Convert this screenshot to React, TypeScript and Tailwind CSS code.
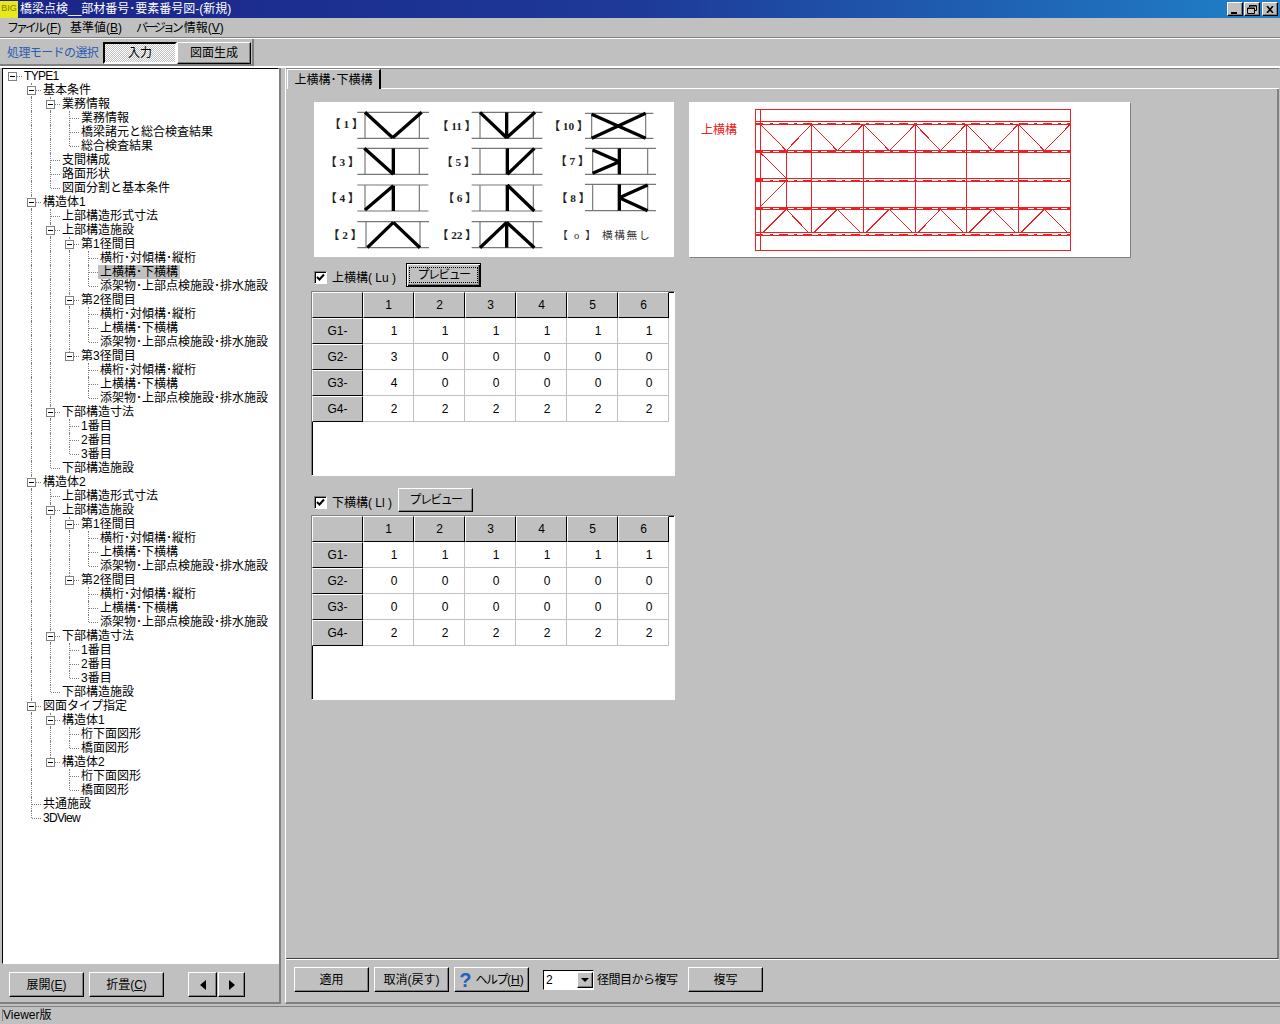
import { ReactNode } from 'react';

const FONT = "font-['Liberation_Sans','Noto_Sans_CJK_JP',sans-serif]";
const BEVEL =
  'border border-t-white border-l-white border-r-black border-b-black shadow-[inset_-1px_-1px_0_#808080] bg-[#c0c0c0]';

const SPAN_ITEMS: [number, string][] = [
  [4, '横桁･対傾構･縦桁'],
  [4, '上横構･下横構'],
  [4, '添架物･上部点検施設･排水施設'],
];

function spans(count: number): [number, string][] {
  const out: [number, string][] = [];
  for (let i = 1; i <= count; i++) {
    out.push([3, `第${i}径間目`], ...SPAN_ITEMS);
  }
  return out;
}

function structure(name: string, spanCount: number): [number, string][] {
  return [
    [1, name],
    [2, '上部構造形式寸法'],
    [2, '上部構造施設'],
    ...spans(spanCount),
    [2, '下部構造寸法'],
    [3, '1番目'],
    [3, '2番目'],
    [3, '3番目'],
    [2, '下部構造施設'],
  ];
}

const TREE: [number, string][] = [
  [0, 'TYPE1'],
  [1, '基本条件'],
  [2, '業務情報'],
  [3, '業務情報'],
  [3, '橋梁諸元と総合検査結果'],
  [3, '総合検査結果'],
  [2, '支間構成'],
  [2, '路面形状'],
  [2, '図面分割と基本条件'],
  ...structure('構造体1', 3),
  ...structure('構造体2', 2),
  [1, '図面タイプ指定'],
  [2, '構造体1'],
  [3, '桁下面図形'],
  [3, '橋面図形'],
  [2, '構造体2'],
  [3, '桁下面図形'],
  [3, '橋面図形'],
  [1, '共通施設'],
  [1, '3DView'],
];

// true when another node of this level follows before the branch closes
function continues(index: number, level: number) {
  for (let j = index + 1; j < TREE.length; j++) {
    if (TREE[j][0] < level) return false;
    if (TREE[j][0] === level) return true;
  }
  return false;
}

function TreeRow({ index }: { index: number }) {
  const [depth, label] = TREE[index];
  const hasChildren = index + 1 < TREE.length && TREE[index + 1][0] > depth;
  const selected = index === 14;
  const latin = /^[A-Z0-9a-z]+$/.test(label);
  const guides = [];
  for (let level = 0; level < depth; level++) {
    guides.push(
      <div key={level} className="w-[19px] h-full shrink-0">
        {level > 0 && continues(index, level) && (
          <div className="ml-[9px] h-full border-l border-dotted border-[#808080]" />
        )}
      </div>,
    );
  }
  return (
    <div className="flex h-[14px] items-center">
      {guides}
      <div className="relative w-[19px] h-full shrink-0">
        {depth > 0 && (
          <div
            className={`ml-[9px] border-l border-dotted border-[#808080] ${
              continues(index, depth) ? 'h-full' : 'h-[7px]'
            }`}
          />
        )}
        <div className="absolute left-[10px] top-[7px] w-[9px] border-t border-dotted border-[#808080]" />
        {hasChildren && (
          <div className="absolute left-[5px] top-[3px] flex h-[9px] w-[9px] items-center justify-center border border-[#808080] bg-white">
            <div className="h-px w-[5px] bg-black" />
          </div>
        )}
      </div>
      <span
        className={`px-[2px] leading-[14px] whitespace-nowrap ${latin ? 'tracking-[-0.700px]' : ''} ${
          selected ? 'bg-[#c0c0c0]' : ''
        }`}
      >
        {label}
      </span>
    </div>
  );
}

function Button({ className, children }: { className: string; children: ReactNode }) {
  return (
    <button type="button" className={`${BEVEL} flex items-center justify-center text-[12px] leading-none ${className}`}>
      {children}
    </button>
  );
}

function Hot({ children }: { children: string }) {
  return (
    <>
      (<span className="underline">{children}</span>)
    </>
  );
}

function Checkbox() {
  return (
    <div className="flex h-[13px] w-[13px] items-center justify-center border border-t-[#808080] border-l-[#808080] border-r-white border-b-white bg-white shadow-[inset_1px_1px_0_#000]">
      <svg viewBox="0 0 9 9" className="h-[9px] w-[9px]">
        <path d="M1 4 L3.5 6.5 L8 1.5" fill="none" stroke="#000" strokeWidth="2" />
      </svg>
    </div>
  );
}

function DataGrid({ rows }: { rows: number[][] }) {
  const headCell = 'flex items-center justify-center border border-t-white border-l-white border-r-black border-b-black bg-[#c0c0c0]';
  return (
    <div className="h-[185px] w-[364px] border border-t-[#808080] border-l-[#808080] border-r-white border-b-white bg-white shadow-[inset_1px_1px_0_#000]">
      <div className="grid grid-cols-[51px_repeat(6,51px)] auto-rows-[26px] w-[357px]">
        <div className={headCell} />
        {[1, 2, 3, 4, 5, 6].map((n) => (
          <div key={n} className={headCell}>
            {n}
          </div>
        ))}
        {rows.map((row, r) => (
          <div key={r} className="contents">
            <div className={headCell}>{`G${r + 1}-`}</div>
            {row.map((v, c) => (
              <div
                key={c}
                className="flex items-center justify-center pl-[12px] border-r border-b border-[#c0c0c0] bg-white"
              >
                {v}
              </div>
            ))}
          </div>
        ))}
      </div>
    </div>
  );
}

type Seg = [number, number, number, number];

const THIN_H = (y1: number, y2: number, x1: number, x2: number): Seg[] => [
  [x1, y1, x2, y1],
  [x1, y2, x2, y2],
];

const BRACES: { label: string; x: number; y: number; thin: Seg[]; thick: Seg[] }[] = [
  { label: '【 1 】', x: 88, y: 100, thin: [...THIN_H(52, 130, 172, 387), [195, 52, 195, 130], [358, 52, 358, 130]], thick: [[195, 52, 278, 128], [278, 128, 365, 52]] },
  { label: '【 11 】', x: 411, y: 104, thin: [...THIN_H(52, 130, 515, 727), [540, 52, 540, 130], [700, 52, 700, 130]], thick: [[540, 52, 620, 128], [620, 128, 705, 52], [620, 52, 620, 130]] },
  { label: '【 10 】', x: 746, y: 104, thin: [...THIN_H(55, 130, 855, 1060), [875, 55, 875, 130], [1037, 55, 1037, 130]], thick: [[875, 58, 1037, 130], [875, 130, 1037, 55]] },
  { label: '【 3 】', x: 76, y: 214, thin: [...THIN_H(160, 238, 172, 385), [195, 160, 195, 238], [358, 160, 358, 238]], thick: [[193, 160, 280, 238], [280, 160, 280, 238]] },
  { label: '【 5 】', x: 424, y: 212, thin: [...THIN_H(160, 238, 515, 727), [540, 160, 540, 238], [700, 160, 700, 238]], thick: [[622, 160, 622, 238], [622, 238, 703, 160]] },
  { label: '【 7 】', x: 766, y: 210, thin: [...THIN_H(160, 238, 855, 1068), [878, 160, 878, 238], [1043, 160, 1043, 238]], thick: [[958, 160, 958, 238], [878, 165, 958, 200], [958, 200, 878, 235]] },
  { label: '【 4 】', x: 76, y: 322, thin: [...THIN_H(270, 348, 172, 385), [195, 270, 195, 348], [358, 270, 358, 348]], thick: [[195, 345, 280, 272], [280, 272, 280, 348]] },
  { label: '【 6 】', x: 428, y: 322, thin: [...THIN_H(270, 348, 515, 727), [540, 270, 540, 348], [700, 270, 700, 348]], thick: [[622, 270, 622, 348], [622, 270, 703, 348]] },
  { label: '【 8 】', x: 768, y: 322, thin: [...THIN_H(268, 347, 855, 1068), [878, 268, 878, 347], [1043, 268, 1043, 347]], thick: [[958, 268, 958, 347], [958, 308, 1043, 270], [958, 308, 1043, 347]] },
  { label: '【 2 】', x: 84, y: 432, thin: [...THIN_H(380, 458, 172, 387), [198, 380, 198, 458], [360, 380, 360, 458]], thick: [[202, 458, 280, 382], [280, 382, 360, 458]] },
  { label: '【 22 】', x: 411, y: 432, thin: [...THIN_H(380, 458, 515, 727), [540, 380, 540, 458], [700, 380, 700, 458]], thick: [[620, 382, 620, 458], [540, 458, 620, 382], [620, 382, 703, 458]] },
];

function TypeChart() {
  return (
    <svg viewBox="42 21 1080 465" className="h-[155px] w-[360px] shrink-0 bg-white">
      {BRACES.map((b) => (
        <g key={b.label}>
          <text x={b.x} y={b.y} fontSize="34" fontWeight="bold" fontFamily="'Liberation Serif','Noto Sans CJK JP',serif" fill="#222">
            {b.label}
          </text>
          {b.thin.map((s, i) => (
            <line key={i} x1={s[0]} y1={s[1]} x2={s[2]} y2={s[3]} stroke="#777" strokeWidth="3.5" />
          ))}
          {b.thick.map((s, i) => (
            <line key={i} x1={s[0]} y1={s[1]} x2={s[2]} y2={s[3]} stroke="#000" strokeWidth="10" />
          ))}
        </g>
      ))}
      <text x="772" y="431" fontSize="32" letterSpacing="5" fontFamily="'Liberation Serif','Noto Sans CJK JP',serif" fill="#333">
        【 o 】 横構無し
      </text>
    </svg>
  );
}

const BAYS = [241, 394, 550, 706, 859, 1015, 1171];
const MIDS = [319, 472, 628, 781, 937, 1093];
const CHORDS: [number, number][] = [
  [80, 88],
  [167, 173],
  [250, 258],
  [337, 343],
  [413, 421],
];

function PlanChart() {
  const red = '#f02020';
  return (
    <svg viewBox="27 21 1323 465" shapeRendering="crispEdges" className="h-[155px] w-[441px] shrink-0 bg-white shadow-[1px_1px_0_#808080]">
      <text x="63" y="118" fontSize="36" fill={red} fontFamily="'Noto Sans CJK JP',sans-serif">
        上横構
      </text>
      <g stroke={red} strokeWidth="3" fill="none">
        <rect x="226" y="43" width="945" height="423" />
        <line x1="241" y1="43" x2="241" y2="466" />
        {CHORDS.map(([a, b]) => (
          <g key={a}>
            <line x1="226" y1={a} x2="1171" y2={a} />
            <line x1="226" y1={b} x2="1171" y2={b} />
            <line x1="270" y1={b - 2} x2="1171" y2={b - 2} strokeWidth="5" strokeDasharray="9 18 27 18" />
            <line x1="226" y1={b - 2} x2="250" y2={b - 2} strokeWidth="6" />
          </g>
        ))}
        {BAYS.slice(1).map((x) => (
          <line key={x} x1={x} y1="88" x2={x} y2="413" />
        ))}
        <line x1="319" y1="173" x2="319" y2="337" />
        <line x1="241" y1="173" x2="319" y2="250" />
        <line x1="241" y1="335" x2="319" y2="258" />
        {MIDS.map((m, i) => (
          <g key={m}>
            <polyline points={`${BAYS[i]},88 ${m},167 ${BAYS[i + 1]},88`} />
            <polyline points={`${BAYS[i] + 8},413 ${m},343 ${BAYS[i + 1] - 8},413`} />
          </g>
        ))}
      </g>
    </svg>
  );
}

function WinButton({ children }: { children: ReactNode }) {
  return <div className={`${BEVEL} flex h-[14px] w-[16px] items-center justify-center`}>{children}</div>;
}

export default function App() {
  return (
    <div className={`${FONT} flex h-[1024px] w-[1280px] flex-col overflow-hidden bg-[#c0c0c0] text-[12px] text-black`}>
      <div className="flex h-[18px] shrink-0 items-center bg-gradient-to-r from-[#1a2488] via-[#1e3a98] via-50% to-[#2080c8] pr-[2px] text-white">
        <div className="flex h-[17px] w-[18px] items-center justify-center bg-[#e8e820] text-[9px] text-[#808000]">BIG</div>
        <span className="ml-[2px] leading-[18px] whitespace-nowrap">橋梁点検__部材番号･要素番号図-(新規)</span>
        <div className="ml-auto flex gap-[1px] text-black">
          <WinButton>
            <div className="mt-[7px] mr-[3px] h-[2px] w-[6px] bg-black" />
          </WinButton>
          <WinButton>
            <svg viewBox="0 0 10 9" className="h-[9px] w-[10px]">
              <path d="M2.5 2V.5h7v5H8M.5 3h7v5.500h-7zM.5 3.500h7M2.500 1h7" fill="none" stroke="#000" />
            </svg>
          </WinButton>
          <div className="ml-[1px]">
            <WinButton>
              <svg viewBox="0 0 8 7" className="h-[7px] w-[8px]">
                <path d="M1 0 L7 7 M7 0 L1 7" fill="none" stroke="#000" strokeWidth="1.600" />
              </svg>
            </WinButton>
          </div>
        </div>
      </div>

      <div className="flex h-[20px] shrink-0 items-center border-b border-[#808080] pl-[7px]">
        <span className="w-[63px] whitespace-nowrap">
          <span className="tracking-[-3px]">ファイル</span>
          <span className="ml-[3px]"><Hot>F</Hot></span>
        </span>
        <span className="w-[66px] whitespace-nowrap">基準値<Hot>B</Hot></span>
        <span className="whitespace-nowrap">
          <span className="tracking-[-3px]">バージョン</span>
          <span className="ml-[3px]">情報<Hot>V</Hot></span>
        </span>
      </div>

      <div className="flex h-[28px] shrink-0 border-t border-white">
        <div className="flex w-[254px] items-center border-r-2 border-b-2 border-[#808080] pt-[3px] pl-[7px]">
          <span className="w-[95px] whitespace-nowrap tracking-[-0.600px] text-[#2a5db0]">処理モードの選択</span>
          <div className="ml-[1px] flex h-[22px] w-[74px] items-center justify-center border-2 border-t-black border-l-black border-r-white border-b-white bg-[repeating-conic-gradient(#ffffff_0_25%,#c0c0c0_0_50%)] bg-[length:2px_2px]">
            入力
          </div>
          <Button className="h-[22px] w-[74px]">図面生成</Button>
        </div>
      </div>

      <div className="flex h-[938px] shrink-0 border-t-2 border-white">
        <div className="flex w-[281px] shrink-0 flex-col border-r-2 border-b-2 border-[#808080] pl-[2px]">
          <div className="h-[896px] w-[277px] border border-t-black border-l-black border-r-white border-b-white bg-white">
            {TREE.map((_, i) => (
              <TreeRow key={i} index={i} />
            ))}
          </div>
          <div className="flex items-center pt-[8px] pl-[7px]">
            <Button className="h-[25px] w-[75px]">展開<Hot>E</Hot></Button>
            <Button className="ml-[5px] h-[25px] w-[75px]">折畳<Hot>C</Hot></Button>
            <Button className="ml-[24px] h-[25px] w-[29px]">
              <div className="border-y-[5px] border-r-[6px] border-y-transparent border-r-black" />
            </Button>
            <Button className="ml-[1px] h-[25px] w-[27px]">
              <div className="border-y-[5px] border-l-[6px] border-y-transparent border-l-black" />
            </Button>
          </div>
        </div>

        <div className="ml-[4px] flex w-[995px] flex-col border-l border-white border-b-2 border-b-[#808080] pr-[1px]">
          <div className="flex h-[21px] shrink-0 items-end border-t border-[#808080] pl-[1px]">
            <div className="flex h-[20px] w-[94px] items-center justify-center border-t border-l border-r-2 border-t-white border-l-white border-r-black whitespace-nowrap">
              上横構･下横構
            </div>
            <div className="h-px flex-1 bg-white" />
          </div>

          <div className="flex h-[870px] shrink-0 flex-col border-r-2 border-b border-r-[#808080] border-b-[#404040] pt-[13px] pl-[25px]">
            <div className="flex gap-[15px] pl-[3px]">
              <TypeChart />
              <PlanChart />
            </div>
            <div className="mt-[6px] flex h-[24px] items-center pl-[3px]">
              <div className="mt-[5px] flex items-center">
                <Checkbox />
                <span className="ml-[5px] w-[74px] whitespace-nowrap">上横構( Lu )</span>
              </div>
              <button type="button" className="flex h-[24px] w-[75px] items-center justify-center border border-black bg-[#c0c0c0] shadow-[inset_1px_1px_0_#fff,inset_-1px_-1px_0_#000,inset_-2px_-2px_0_#808080]">
                <span className="border border-dotted border-black px-[7px] leading-[14px] tracking-[-1.600px]">プレビュー</span>
              </button>
            </div>
            <div className="mt-[4px]">
              <DataGrid
                rows={[
                  [1, 1, 1, 1, 1, 1],
                  [3, 0, 0, 0, 0, 0],
                  [4, 0, 0, 0, 0, 0],
                  [2, 2, 2, 2, 2, 2],
                ]}
              />
            </div>
            <div className="mt-[12px] flex h-[24px] items-center pl-[3px]">
              <div className="mt-[5px] flex items-center">
                <Checkbox />
                <span className="ml-[5px] w-[66px] whitespace-nowrap">下横構( Ll )</span>
              </div>
              <Button className="h-[24px] w-[75px] tracking-[-1.600px]">プレビュー</Button>
            </div>
            <div className="mt-[3px]">
              <DataGrid
                rows={[
                  [1, 1, 1, 1, 1, 1],
                  [0, 0, 0, 0, 0, 0],
                  [0, 0, 0, 0, 0, 0],
                  [2, 2, 2, 2, 2, 2],
                ]}
              />
            </div>
          </div>

          <div className="flex flex-1 items-center border-t border-white pb-[3px] pl-[8px]">
            <Button className="h-[25px] w-[75px]">適用</Button>
            <Button className="ml-[5px] h-[25px] w-[75px]">取消(戻す)</Button>
            <Button className="ml-[5px] h-[25px] w-[75px]">
              <span className="mr-[4px] text-[20px] font-bold text-[#2060c0]">?</span>
              <span className="whitespace-nowrap">
                <span className="tracking-[-1.500px]">ヘルプ</span>
                <Hot>H</Hot>
              </span>
            </Button>
            <div className="ml-[14px] flex h-[20px] w-[51px] items-center justify-between border border-t-black border-l-black border-r-white border-b-white bg-white pl-[2px]">
              2
              <div className={`${BEVEL} flex h-[16px] w-[16px] items-center justify-center`}>
                <div className="border-x-[4px] border-t-[4px] border-x-transparent border-t-black" />
              </div>
            </div>
            <span className="ml-[3px] w-[91px] whitespace-nowrap tracking-[-0.500px]">径間目から複写</span>
            <Button className="h-[25px] w-[75px]">複写</Button>
          </div>
        </div>
      </div>

      <div className="mt-[2px] flex flex-1 items-center border-t border-[#808080] pb-[2px] pl-[2px] leading-none">
        <span className="border-l border-[#808080] whitespace-nowrap">Viewer版</span>
      </div>
    </div>
  );
}
